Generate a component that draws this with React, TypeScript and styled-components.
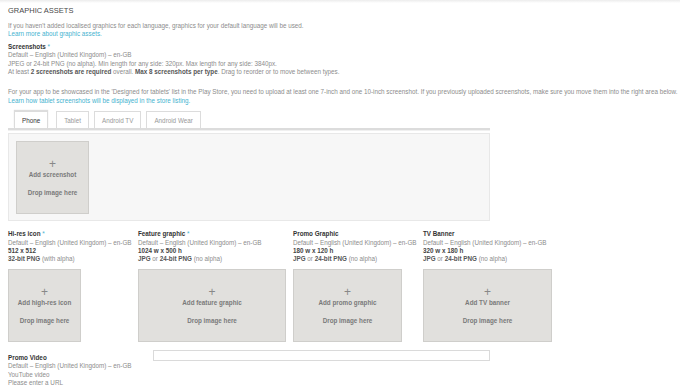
import React from "react";
import styled, { createGlobalStyle } from "styled-components";

const GlobalStyle = createGlobalStyle`
  html, body {
    margin: 0;
    padding: 0;
    background: #fff;
  }
  body {
    font-family: "Liberation Sans", Arial, sans-serif;
    font-size: 6.3px;
    color: #8c8c8c;
  }
`;

const Page = styled.div`
  width: 680px;
  height: 388px;
  overflow: hidden;
  box-sizing: border-box;
`;

const TopShadow = styled.div`
  height: 3px;
  background: linear-gradient(#ececec, #fff);
`;

const Content = styled.div`
  padding: 0 8px;
`;

const SectionTitle = styled.h2`
  margin: 3px 0 7px;
  font-size: 7.5px;
  font-weight: normal;
  color: #4a4a4a;
  line-height: 9px;
`;

const Line = styled.div<{ dark?: boolean }>`
  line-height: 8.4px;
  white-space: nowrap;
  color: ${(props) => (props.dark ? "#444" : "#8c8c8c")};
`;

const Link = styled.a`
  display: block;
  line-height: 8.4px;
  color: #45b3cf;
  text-decoration: none;
  white-space: nowrap;
`;

const Block = styled.div<{ gap?: number }>`
  margin-top: ${(props) => props.gap ?? 0}px;
`;

const FieldTitle = styled.div`
  font-weight: bold;
  color: #333;
  line-height: 8.4px;
  white-space: nowrap;
`;

const Req = styled.span`
  color: #45b3cf;
  font-weight: normal;
`;

const Strong = styled.b`
  color: #555;
`;

const Tabs = styled.div`
  display: flex;
  gap: 5px;
  margin-top: 6px;
  padding-left: 6px;
  width: 482px;
  box-sizing: border-box;
  border-bottom: 2px solid #dcdcdc;
  box-shadow: 0 1px 0 #f0f0f0;
`;

const Tab = styled.div<{ active?: boolean }>`
  height: 16px;
  padding: 0 7px;
  display: flex;
  align-items: center;
  border: 1px solid #dcdcdc;
  border-bottom: none;
  background: #fff;
  color: ${(props) => (props.active ? "#333" : "#999")};
  margin-right: ${(props) => (props.active ? 3 : 0)}px;
  box-shadow: ${(props) => (props.active ? "0 -1px 1px #ddd" : "none")};
`;

const Panel = styled.div`
  margin-top: 3px;
  width: 482px;
  height: 88px;
  box-sizing: border-box;
  padding: 7px;
  background: #f7f7f7;
  border: 1px solid #e8e8e8;
`;

const DropBox = styled.div<{ w: number }>`
  width: ${(props) => props.w}px;
  height: 73px;
  box-sizing: border-box;
  background: #e1e0dd;
  border: 1px solid #cfcecb;
  display: flex;
  flex-direction: column;
  align-items: center;
  padding-top: 17px;
  color: #7a7a7a;
  font-weight: bold;
`;

const Plus = styled.div`
  font-size: 12px;
  font-weight: normal;
  line-height: 10px;
  color: #888;
`;

const BoxLabel = styled.div`
  margin-top: 2px;
  line-height: 8px;
`;

const BoxHint = styled.div`
  margin-top: 10px;
  line-height: 8px;
`;

const AssetRow = styled.div`
  display: grid;
  grid-template-columns: 130px 155px 130px auto;
  margin-top: 9px;
`;

const Asset = styled.div``;

const AssetBox = styled.div`
  margin-top: 5px;
`;

const VideoRow = styled.div`
  display: flex;
  margin-top: 12px;
`;

const VideoLabel = styled.div`
  width: 145px;
`;

const UrlInput = styled.div`
  width: 337px;
  height: 11px;
  margin-top: -4px;
  box-sizing: border-box;
  border: 1px solid #dadada;
  background: #fff;
`;

const LOCALE = "Default – English (United Kingdom) – en-GB";

type AssetProps = {
  title: string;
  required?: boolean;
  size: string;
  format: React.ReactNode;
  label: string;
  width: number;
};

const AssetColumn = ({ title, required, size, format, label, width }: AssetProps) => (
  <Asset>
    <FieldTitle>
      {title}
      {required && <Req> *</Req>}
    </FieldTitle>
    <Line>{LOCALE}</Line>
    <Line dark>
      <b>{size}</b>
    </Line>
    <Line>{format}</Line>
    <AssetBox>
      <DropBox w={width}>
        <Plus>+</Plus>
        <BoxLabel>{label}</BoxLabel>
        <BoxHint>Drop image here</BoxHint>
      </DropBox>
    </AssetBox>
  </Asset>
);

const jpgFormat = (
  <>
    <Strong>JPG</Strong> or <Strong>24-bit PNG</Strong> (no alpha)
  </>
);

export default function App() {
  return (
    <Page>
      <GlobalStyle />
      <TopShadow />
      <Content>
        <SectionTitle>GRAPHIC ASSETS</SectionTitle>
        <Line>
          If you haven't added localised graphics for each language, graphics
          for your default language will be used.
        </Line>
        <Link>Learn more about graphic assets.</Link>

        <Block gap={4}>
          <FieldTitle>
            Screenshots<Req> *</Req>
          </FieldTitle>
          <Line>{LOCALE}</Line>
          <Line>
            JPEG or 24-bit PNG (no alpha). Min length for any side: 320px. Max
            length for any side: 3840px.
          </Line>
          <Line>
            At least <Strong>2 screenshots are required</Strong> overall.{" "}
            <Strong>Max 8 screenshots per type</Strong>. Drag to reorder or to
            move between types.
          </Line>
        </Block>

        <Block gap={12}>
          <Line>
            For your app to be showcased in the 'Designed for tablets' list in
            the Play Store, you need to upload at least one 7-inch and one
            10-inch screenshot. If you previously uploaded screenshots, make
            sure you move them into the right area below.
          </Line>
          <Link>Learn how tablet screenshots will be displayed in the store listing.</Link>
        </Block>

        <Tabs>
          <Tab active>Phone</Tab>
          <Tab>Tablet</Tab>
          <Tab>Android TV</Tab>
          <Tab>Android Wear</Tab>
        </Tabs>
        <Panel>
          <DropBox w={73}>
            <Plus>+</Plus>
            <BoxLabel>Add screenshot</BoxLabel>
            <BoxHint>Drop image here</BoxHint>
          </DropBox>
        </Panel>

        <AssetRow>
          <AssetColumn
            title="Hi-res icon"
            required
            size="512 x 512"
            format={
              <>
                <Strong>32-bit PNG</Strong> (with alpha)
              </>
            }
            label="Add high-res icon"
            width={73}
          />
          <AssetColumn
            title="Feature graphic"
            required
            size="1024 w x 500 h"
            format={jpgFormat}
            label="Add feature graphic"
            width={148}
          />
          <AssetColumn
            title="Promo Graphic"
            size="180 w x 120 h"
            format={jpgFormat}
            label="Add promo graphic"
            width={109}
          />
          <AssetColumn
            title="TV Banner"
            size="320 w x 180 h"
            format={jpgFormat}
            label="Add TV banner"
            width={129}
          />
        </AssetRow>

        <VideoRow>
          <VideoLabel>
            <FieldTitle>Promo Video</FieldTitle>
            <Line>{LOCALE}</Line>
            <Line>YouTube video</Line>
            <Line>Please enter a URL</Line>
          </VideoLabel>
          <UrlInput />
        </VideoRow>
      </Content>
    </Page>
  );
}
